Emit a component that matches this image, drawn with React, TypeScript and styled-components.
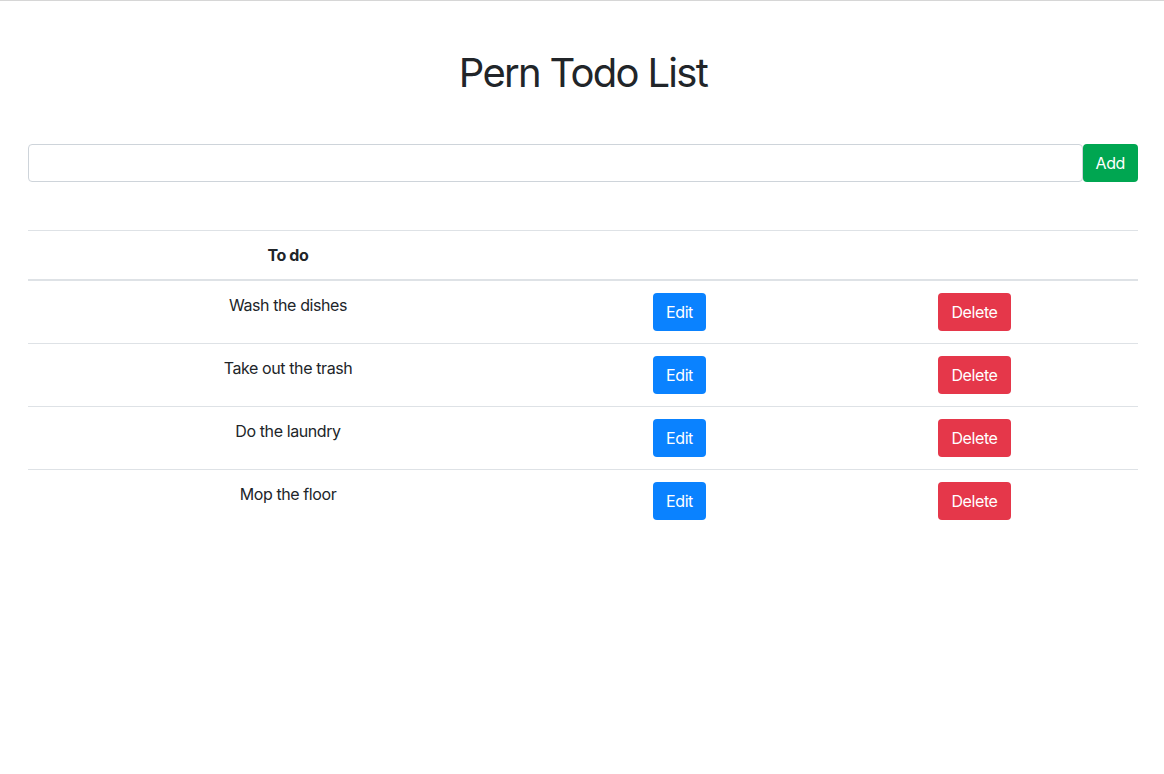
import React from "react";
import styled, { createGlobalStyle } from "styled-components";

const GlobalStyle = createGlobalStyle`
  html, body { margin: 0; padding: 0; background: #ffffff; }
  body {
    font-family: "Inter", "Roboto", "Liberation Sans", sans-serif;
    font-size: 16px;
    line-height: 1.5;
    letter-spacing: -0.4px;
    color: #212529;
    border-top: 1px solid #d6d6d6;
  }
  * { box-sizing: border-box; }
`;

const Container = styled.div`
  max-width: 1112px;
  margin: 0 auto;
  padding-left: 2px;
`;

const Title = styled.h1`
  margin: 48px 0 0;
  font-size: 40px;
  font-weight: 400;
  line-height: 48px;
  letter-spacing: -1.7px;
  text-align: center;
  color: #212529;
`;

const Form = styled.form`
  display: flex;
  margin-top: 47px;
`;

const TextInput = styled.input`
  flex: 1;
  height: 38px;
  padding: 6px 12px;
  font: inherit;
  color: #495057;
  background: #fff;
  border: 1px solid #ced4da;
  border-radius: 4px;
  outline: none;
`;

const Button = styled.button<{ $variant: "success" | "primary" | "danger" }>`
  height: 38px;
  padding: 6px 12px;
  font-family: inherit;
  font-size: 16px;
  line-height: 24px;
  letter-spacing: -0.4px;
  color: #fff;
  border: 1px solid transparent;
  border-radius: 4px;
  cursor: pointer;
  background: ${(p) =>
    p.$variant === "success" ? "#00a651" : p.$variant === "primary" ? "#0a82ff" : "#e5374a"};
`;

const Table = styled.table`
  width: 100%;
  margin-top: 48px;
  border-collapse: collapse;
  text-align: center;
`;

const Col = styled.col<{ $w: number }>`
  width: ${(p) => p.$w}px;
`;

const Th = styled.th`
  padding: 12px;
  font-weight: 700;
  vertical-align: bottom;
  border-top: 1px solid #dee2e6;
  border-bottom: 2px solid #dee2e6;
`;

const Td = styled.td`
  padding: 12px;
  vertical-align: top;
  border-top: 1px solid #dee2e6;
`;

const todos = ["Wash the dishes", "Take out the trash", "Do the laundry", "Mop the floor"];

export default function App() {
  return (
    <>
      <GlobalStyle />
      <Container>
        <Title>Pern Todo List</Title>
        <Form onSubmit={(e) => e.preventDefault()}>
          <TextInput type="text" />
          <Button $variant="success" type="submit">Add</Button>
        </Form>
        <Table>
          <colgroup>
            <Col $w={520} />
            <Col $w={263} />
            <Col $w={327} />
          </colgroup>
          <thead>
            <tr>
              <Th>To do</Th>
              <Th></Th>
              <Th></Th>
            </tr>
          </thead>
          <tbody>
            {todos.map((t) => (
              <tr key={t}>
                <Td>{t}</Td>
                <Td><Button $variant="primary" type="button">Edit</Button></Td>
                <Td><Button $variant="danger" type="button">Delete</Button></Td>
              </tr>
            ))}
          </tbody>
        </Table>
      </Container>
    </>
  );
}
